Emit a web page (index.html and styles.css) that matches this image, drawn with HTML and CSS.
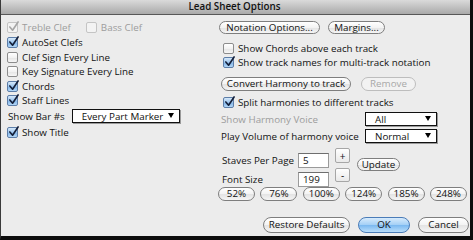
FILE: index.html
```html
<!DOCTYPE html>
<html>
<head>
<meta charset="utf-8">
<link rel="stylesheet" href="styles.css">
</head>
<body>
<div class="window">
  <div class="titlebar">Lead Sheet Options</div>
  <div class="content">
    <div class="left">
      <div class="row h15">
        <label class="cb disabled checked"><span class="box"><svg viewBox="0 0 12 12"><path d="M2 6 L5 9.5 L11 0.5"/></svg></span>Treble Clef</label>
        <label class="cb disabled bass"><span class="box"></span>Bass Clef</label>
      </div>
      <div class="row h15"><label class="cb checked"><span class="box"><svg viewBox="0 0 12 12"><path d="M2 6 L5 9.5 L11 0.5"/></svg></span>AutoSet Clefs</label></div>
      <div class="row h14"><label class="cb"><span class="box"></span>Clef Sign Every Line</label></div>
      <div class="row h15"><label class="cb"><span class="box"></span>Key Signature Every Line</label></div>
      <div class="row h14"><label class="cb checked"><span class="box"><svg viewBox="0 0 12 12"><path d="M2 6 L5 9.5 L11 0.5"/></svg></span>Chords</label></div>
      <div class="row h15"><label class="cb checked"><span class="box"><svg viewBox="0 0 12 12"><path d="M2 6 L5 9.5 L11 0.5"/></svg></span>Staff Lines</label></div>
      <div class="row h16 barrow">
        <span class="lbl">Show Bar #s</span>
        <div class="select barsel"><span>Every Part Marker</span><i class="tri"></i></div>
      </div>
      <div class="row h16"><label class="cb checked"><span class="box"><svg viewBox="0 0 12 12"><path d="M2 6 L5 9.5 L11 0.5"/></svg></span>Show Title</label></div>
    </div>
    <div class="right">
      <div class="btnrow top">
        <div class="btn w-notation">Notation Options...</div>
        <div class="btn w-margins">Margins...</div>
      </div>
      <div class="row h14 rcb first"><label class="cb"><span class="box"></span>Show Chords above each track</label></div>
      <div class="row h14 rcb"><label class="cb checked"><span class="box"><svg viewBox="0 0 12 12"><path d="M2 6 L5 9.5 L11 0.5"/></svg></span>Show track names for multi-track notation</label></div>
      <div class="btnrow convert">
        <div class="btn w-convert">Convert Harmony to track</div>
        <div class="btn w-remove disabled">Remove</div>
      </div>
      <div class="row h14 rcb split"><label class="cb checked"><span class="box"><svg viewBox="0 0 12 12"><path d="M2 6 L5 9.5 L11 0.5"/></svg></span>Split harmonies to different tracks</label></div>
      <div class="selrow first">
        <span class="lbl disabled-text">Show Harmony Voice</span>
        <div class="select voicesel"><span>All</span><i class="tri"></i></div>
      </div>
      <div class="selrow">
        <span class="lbl">Play Volume of harmony voice</span>
        <div class="select voicesel"><span>Normal</span><i class="tri"></i></div>
      </div>
      <div class="spin">
        <div class="fields">
          <span class="lbl">Staves Per Page</span><span class="input">5</span>
          <span class="lbl">Font Size</span><span class="input">199</span>
        </div>
        <div class="steppers">
          <div class="step plus">+</div>
          <div class="step minus">-</div>
        </div>
        <div class="btn w-update">Update</div>
      </div>
      <div class="pctrow">
        <div class="btn pct">52%</div>
        <div class="btn pct">76%</div>
        <div class="btn pct">100%</div>
        <div class="btn pct">124%</div>
        <div class="btn pct">185%</div>
        <div class="btn pct">248%</div>
      </div>
    </div>
  </div>
  <div class="footer">
    <div class="btn w-restore">Restore Defaults</div>
    <div class="btn ok w-ok">OK</div>
    <div class="btn w-cancel">Cancel</div>
  </div>
</div>
</body>
</html>
```

FILE: styles.css
```css
* { box-sizing: border-box; margin: 0; padding: 0; }
body {
  margin: 0;
  width: 473px;
  height: 240px;
  overflow: hidden;
  background: #111;
  font-family: "Open Sans", "DejaVu Sans", sans-serif;
  font-size: 9.8px;
  color: #111;
}
.window {
  width: 473px;
  height: 240px;
  border-left: 1px solid #3a3a3a;
  border-right: 3px solid #0d0d0d;
  border-bottom: 4px solid #0d0d0d;
  background: #ececec;
  display: flex;
  flex-direction: column;
}
.titlebar {
  height: 15px;
  flex: none;
  border-bottom: 1px solid #575757;
  background: linear-gradient(#dadada, #a9a9a9);
  text-align: center;
  font-weight: 600;
  font-size: 9.8px;
  line-height: 14px;
  padding-right: 2px;
}
.content { display: flex; flex: none; }
.left {
  width: 218px;
  padding: 5px 0 0 6px;
  display: flex;
  flex-direction: column;
}
.row { display: flex; align-items: center; white-space: nowrap; }
.h14 { height: 14px; }
.h15 { height: 15px; }
.h16 { height: 16px; }

.cb { display: flex; align-items: center; white-space: nowrap; }
.cb .box {
  position: relative;
  width: 11px;
  height: 11px;
  margin-right: 4px;
  border: 1px solid #8c8c8c;
  border-radius: 2px;
  background: linear-gradient(#ffffff, #f2f2f2 50%, #e4e4e4 51%, #f6f6f6);
  flex: none;
}
.cb.checked .box {
  border-color: #5d7ea8;
  background: linear-gradient(#d6e8fa, #9cc6ef 50%, #7fb3e8 51%, #b3d7f7);
}
.cb .box svg {
  position: absolute;
  left: 0px;
  top: -2px;
  width: 11px;
  height: 12px;
  overflow: visible;
}
.cb .box svg path {
  fill: none;
  stroke: #14203a;
  stroke-width: 1.8;
  stroke-linecap: round;
  stroke-linejoin: round;
}
.cb.disabled { color: #9c9c9c; }
.cb.disabled .box {
  border-color: #c4c4c4;
  background: #f3f3f3;
}
.cb.disabled .box svg path { stroke: #a6a6a6; }
.cb.bass { margin-left: 15px; }

.barrow .lbl { margin-left: 1px; margin-right: 7px; }
.select {
  position: relative;
  display: flex;
  align-items: center;
  height: 14px;
  background: #fff;
  border: 1px solid #111;
  box-shadow: 1px 1px 0 #9a9a9a;
  padding-left: 9px;
  white-space: nowrap;
}
.select .tri {
  position: absolute;
  right: 5px;
  top: 3px;
  width: 0;
  height: 0;
  border-left: 3.5px solid transparent;
  border-right: 3.5px solid transparent;
  border-top: 5px solid #000;
}
.barsel { width: 108px; }
.voicesel { width: 72px; }

.right {
  width: 251px;
  display: flex;
  flex-direction: column;
}
.btnrow { display: flex; white-space: nowrap; }
.btnrow.top { margin-top: 6px; gap: 8px; }
.btnrow.convert { margin-top: 8px; margin-left: 2px; gap: 10px; }

.btn {
  height: 14px;
  display: flex;
  align-items: center;
  justify-content: center;
  border: 1px solid #7e7e7e;
  border-radius: 8px;
  background: linear-gradient(#ffffff, #f3f3f3 50%, #e3e3e3 51%, #f5f5f5);
  white-space: nowrap;
  line-height: 1;
}
.btn.disabled { color: #a8a8a8; border-color: #bdbdbd; background: #f2f2f2; }
.w-notation { width: 101px; height: 13px; }
.w-margins { width: 57px; height: 13px; }
.w-convert { width: 130px; }
.w-remove { width: 55px; }

.rcb { padding-left: 4px; }
.rcb.first { margin-top: 7px; }
.rcb.split { margin-top: 4px; }

.selrow {
  display: grid;
  grid-template-columns: 146px 72px;
  align-items: center;
  height: 14px;
  margin-top: 3px;
  white-space: nowrap;
}
.selrow .lbl { padding-left: 2px; }
.disabled-text { color: #9c9c9c; }

.spin { display: flex; align-items: flex-start; margin-top: 5px; }
.fields {
  display: grid;
  grid-template-columns: 76px 31px;
  grid-template-rows: 15px 15px;
  row-gap: 4px;
  align-items: center;
  margin-left: 3px;
  margin-top: 5px;
}
.input {
  height: 15px;
  background: #fff;
  border: 1px solid #9a9a9a;
  border-top-color: #6e6e6e;
  padding-left: 4px;
  display: flex;
  align-items: center;
}
.steppers { display: flex; flex-direction: column; gap: 5px; margin-left: 6px; }
.step {
  width: 15px;
  height: 15px;
  border: 1px solid #a6a6a6;
  border-radius: 2px;
  background: linear-gradient(#ffffff, #e9e9e9);
  display: flex;
  align-items: center;
  justify-content: center;
  font-size: 10px;
  line-height: 1;
}
.step.minus { height: 14px; }
.w-update { width: 43px; height: 13px; margin-left: 7px; margin-top: 10px; }

.pctrow {
  display: flex;
  justify-content: space-between;
  width: 249px;
  margin-top: 0px;
  margin-left: -1px;
}
.pct { width: 37px; }

.footer {
  margin-top: auto;
  display: flex;
  justify-content: flex-end;
  gap: 8px;
  padding: 0 1px 3px 0;
}
.footer .btn { height: 16px; }
.w-restore { width: 87px; }
.w-ok { width: 52px; }
.w-cancel { width: 51px; }
.btn.ok {
  border-color: #4a7cb8;
  background: linear-gradient(#d7ebfc, #a3cff6 50%, #7ab8f0 51%, #b9defb);
}
```
